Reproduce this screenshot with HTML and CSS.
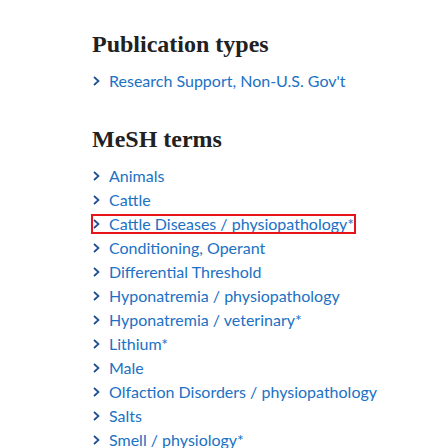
FILE: index.html
```html
<!DOCTYPE html>
<html>
<head>
<meta charset="utf-8">
<link rel="stylesheet" href="styles.css">
</head>
<body>
<div class="page">
  <section class="section pub">
    <h2 class="heading">Publication types</h2>
    <ul class="keywords">
      <li class="kw"><a class="kw-link"><svg class="chev" viewBox="0 0 7 10" width="7" height="10"><path d="M1 1 L5.5 5 L1 9" fill="none" stroke="currentColor" stroke-width="1.7"/></svg><span>Research Support, Non-U.S. Gov't</span></a></li>
    </ul>
  </section>
  <section class="section mesh">
    <h2 class="heading">MeSH terms</h2>
    <ul class="keywords">
      <li class="kw"><a class="kw-link"><svg class="chev" viewBox="0 0 7 10" width="7" height="10"><path d="M1 1 L5.5 5 L1 9" fill="none" stroke="currentColor" stroke-width="1.7"/></svg><span>Animals</span></a></li>
      <li class="kw"><a class="kw-link"><svg class="chev" viewBox="0 0 7 10" width="7" height="10"><path d="M1 1 L5.5 5 L1 9" fill="none" stroke="currentColor" stroke-width="1.7"/></svg><span>Cattle</span></a></li>
      <li class="kw"><a class="kw-link focused"><svg class="chev" viewBox="0 0 7 10" width="7" height="10"><path d="M1 1 L5.5 5 L1 9" fill="none" stroke="currentColor" stroke-width="1.7"/></svg><span>Cattle Diseases / physiopathology*</span></a></li>
      <li class="kw"><a class="kw-link"><svg class="chev" viewBox="0 0 7 10" width="7" height="10"><path d="M1 1 L5.5 5 L1 9" fill="none" stroke="currentColor" stroke-width="1.7"/></svg><span>Conditioning, Operant</span></a></li>
      <li class="kw"><a class="kw-link"><svg class="chev" viewBox="0 0 7 10" width="7" height="10"><path d="M1 1 L5.5 5 L1 9" fill="none" stroke="currentColor" stroke-width="1.7"/></svg><span>Differential Threshold</span></a></li>
      <li class="kw"><a class="kw-link"><svg class="chev" viewBox="0 0 7 10" width="7" height="10"><path d="M1 1 L5.5 5 L1 9" fill="none" stroke="currentColor" stroke-width="1.7"/></svg><span>Hyponatremia / physiopathology</span></a></li>
      <li class="kw"><a class="kw-link"><svg class="chev" viewBox="0 0 7 10" width="7" height="10"><path d="M1 1 L5.5 5 L1 9" fill="none" stroke="currentColor" stroke-width="1.7"/></svg><span>Hyponatremia / veterinary*</span></a></li>
      <li class="kw"><a class="kw-link"><svg class="chev" viewBox="0 0 7 10" width="7" height="10"><path d="M1 1 L5.5 5 L1 9" fill="none" stroke="currentColor" stroke-width="1.7"/></svg><span>Lithium*</span></a></li>
      <li class="kw"><a class="kw-link"><svg class="chev" viewBox="0 0 7 10" width="7" height="10"><path d="M1 1 L5.5 5 L1 9" fill="none" stroke="currentColor" stroke-width="1.7"/></svg><span>Male</span></a></li>
      <li class="kw"><a class="kw-link"><svg class="chev" viewBox="0 0 7 10" width="7" height="10"><path d="M1 1 L5.5 5 L1 9" fill="none" stroke="currentColor" stroke-width="1.7"/></svg><span>Olfaction Disorders / physiopathology</span></a></li>
      <li class="kw"><a class="kw-link"><svg class="chev" viewBox="0 0 7 10" width="7" height="10"><path d="M1 1 L5.5 5 L1 9" fill="none" stroke="currentColor" stroke-width="1.7"/></svg><span>Salts</span></a></li>
      <li class="kw"><a class="kw-link"><svg class="chev" viewBox="0 0 7 10" width="7" height="10"><path d="M1 1 L5.5 5 L1 9" fill="none" stroke="currentColor" stroke-width="1.7"/></svg><span>Smell / physiology*</span></a></li>
    </ul>
  </section>
</div>
</body>
</html>
```
FILE: styles.css
```css
html, body {
  margin: 0;
  padding: 0;
  background: #ffffff;
}
.page {
  padding: 29px 0 0 92px;
  font-family: "Lato", "Open Sans", sans-serif;
}
.heading {
  margin: 0;
  font-family: "Liberation Serif", serif;
  font-weight: bold;
  font-size: 24px;
  line-height: 30px;
  color: #212121;
}
.keywords {
  list-style: none;
  margin: 0;
  padding: 0;
}
.pub .heading {
  margin-bottom: 10px;
}
.mesh {
  margin-top: 31px;
}
.mesh .heading {
  margin-bottom: 10px;
}
.kw {
  display: flex;
  height: 24px;
  font-size: 16px;
  line-height: 24px;
}
.kw-link {
  display: inline-flex;
  align-items: center;
  height: 24px;
  margin-left: -3px;
  padding: 0 4px 0 3px;
  color: #2071c4;
}
.chev {
  flex: none;
  margin: 0 9px 0 1px;
  color: #1d4f8f;
}
.focused {
  outline: 2px solid #e8141b;
  outline-offset: -4px;
}
```
